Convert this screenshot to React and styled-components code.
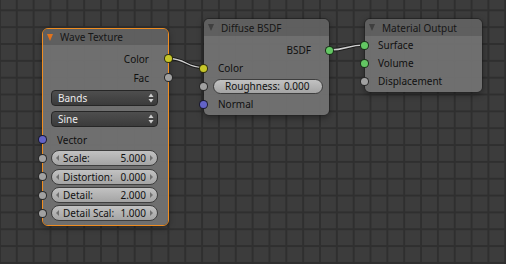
import React from "react";
import styled, { createGlobalStyle } from "styled-components";

const GlobalStyle = createGlobalStyle`
  html, body { margin: 0; padding: 0; background: #3c3c3c; }
  body { font-family: "Noto Sans", "DejaVu Sans", sans-serif; }
`;

const Canvas = styled.div`
  position: relative;
  width: 506px;
  height: 264px;
  overflow: hidden;
  background-color: #3c3c3c;
  background-image:
    linear-gradient(to right, #2f2f2f 1.5px, transparent 1.5px),
    linear-gradient(to bottom, #2f2f2f 1.5px, transparent 1.5px);
  background-size: 16.85px 16.85px;
  background-position: 15.8px 9.3px;
`;

const Wires = styled.svg`
  position: absolute;
  left: 0;
  top: 0;
  pointer-events: none;
`;

const NodeBox = styled.div`
  position: absolute;
  left: ${(p) => p.$x}px;
  top: ${(p) => p.$y}px;
  width: ${(p) => p.$w}px;
  box-sizing: border-box;
  border: 1px solid ${(p) => (p.$selected ? "#ef8d21" : "rgba(20,20,20,0.55)")};
  border-radius: 6px;
  box-shadow: 0 2px 6px rgba(0, 0, 0, 0.35);
`;

const Header = styled.div`
  height: ${(p) => p.$h}px;
  display: flex;
  align-items: center;
  gap: 6px;
  padding-left: 4px;
  background: rgba(99, 99, 99, 0.92);
  border-radius: 5px 5px 0 0;
`;

const Triangle = styled.span`
  width: 0;
  height: 0;
  border-left: 3.5px solid transparent;
  border-right: 3.5px solid transparent;
  border-top: 7px solid ${(p) => p.$color};
  margin-right: 1px;
`;

const Title = styled.span`
  font-size: 10px;
  color: #161616;
  line-height: 1;
`;

const Body = styled.div`
  display: flex;
  flex-direction: column;
  padding: ${(p) => p.$pt}px 0 ${(p) => p.$pb}px;
  background: rgba(116, 116, 116, 0.92);
  border-radius: 0 0 5px 5px;
`;

const Row = styled.div`
  position: relative;
  height: ${(p) => p.$h}px;
  margin-top: ${(p) => p.$mt || 0}px;
  display: flex;
  align-items: center;
  justify-content: ${(p) => (p.$out ? "flex-end" : "flex-start")};
  padding: 0 ${(p) => p.$pr || 0}px 0 ${(p) => p.$pl || 0}px;
`;

const Label = styled.span`
  font-size: 10px;
  color: #101010;
  line-height: 1;
`;

const Socket = styled.span`
  position: absolute;
  top: 50%;
  ${(p) => (p.$out ? "right: -5px;" : "left: -5px;")}
  width: 9px;
  height: 9px;
  box-sizing: border-box;
  margin-top: -4.5px;
  border-radius: 50%;
  background: ${(p) => p.$color};
  border: 1px solid rgba(0, 0, 0, 0.75);
`;

const Dropdown = styled.div`
  flex: 1;
  height: 16px;
  box-sizing: border-box;
  display: flex;
  align-items: center;
  justify-content: space-between;
  padding: 0 3px 0 6px;
  border: 1px solid #262626;
  border-radius: 4px;
  background: linear-gradient(to bottom, #4e4e4e, #3b3b3b);
  color: #ececec;
  font-size: 10px;
`;

const NumField = styled.div`
  flex: 1;
  height: ${(p) => p.$h || 16}px;
  box-sizing: border-box;
  display: flex;
  align-items: center;
  gap: 4px;
  padding: 0 ${(p) => p.$pr}px 0 ${(p) => p.$pl}px;
  border: 1px solid #3e3e3e;
  border-radius: 8px;
  background: linear-gradient(to bottom, #c2c2c2, #a4a4a4);
  color: #111;
  font-size: 10px;
`;

const FieldLabel = styled.span`
  flex: 1;
  white-space: nowrap;
`;

const Arrow = styled.span`
  width: 0;
  height: 0;
  border-top: 3px solid transparent;
  border-bottom: 3px solid transparent;
  ${(p) =>
    p.$dir === "left"
      ? "border-right: 3.5px solid #707070;"
      : "border-left: 3.5px solid #707070;"}
`;

const UpDown = () => (
  <svg width="6" height="10" viewBox="0 0 6 10">
    <path d="M3 0.5 L5.5 4 L0.5 4 Z" fill="#cfcfcf" />
    <path d="M3 9.5 L5.5 6 L0.5 6 Z" fill="#cfcfcf" />
  </svg>
);

const Slider = ({ label, value }) => (
  <NumField $pl={4} $pr={4}>
    <Arrow $dir="left" />
    <FieldLabel>{label}</FieldLabel>
    <span>{value}</span>
    <Arrow $dir="right" />
  </NumField>
);

const COLORS = {
  color: "#c7c729",
  value: "#a1a1a1",
  vector: "#6363c7",
  shader: "#63c763",
};

export default function App() {
  return (
    <>
      <GlobalStyle />
      <Canvas>
        <Wires width="506" height="264" viewBox="0 0 506 264">
          <g fill="none" strokeLinecap="round">
            <path d="M168.5 58.5 C 186 58.5, 186 67.5, 203.5 67.5" stroke="rgba(25,25,25,0.9)" strokeWidth="3.4" />
            <path d="M168.5 58.5 C 186 58.5, 186 67.5, 203.5 67.5" stroke="#cfcfcf" strokeWidth="1.4" />
            <path d="M329.5 50 C 347 50, 347 45, 364.5 45" stroke="rgba(25,25,25,0.9)" strokeWidth="3.4" />
            <path d="M329.5 50 C 347 50, 347 45, 364.5 45" stroke="#cfcfcf" strokeWidth="1.4" />
          </g>
        </Wires>

        <NodeBox $x={42} $y={28} $w={127} $selected>
          <Header $h={16}>
            <Triangle $color="#e2731c" />
            <Title>Wave Texture</Title>
          </Header>
          <Body $pt={4} $pb={4}>
            <Row $h={19} $out $pr={19}>
              <Label>Color</Label>
              <Socket $out $color={COLORS.color} />
            </Row>
            <Row $h={19} $out $pr={19}>
              <Label>Fac</Label>
              <Socket $out $color={COLORS.value} />
            </Row>
            <Row $h={16} $mt={3} $pl={8} $pr={10}>
              <Dropdown>
                <span>Bands</span>
                <UpDown />
              </Dropdown>
            </Row>
            <Row $h={16} $mt={4.7} $pl={8} $pr={10}>
              <Dropdown>
                <span>Sine</span>
                <UpDown />
              </Dropdown>
            </Row>
            <Row $h={19} $mt={3.8} $pl={14}>
              <Label>Vector</Label>
              <Socket $color={COLORS.vector} />
            </Row>
            <Row $h={16} $mt={1} $pl={8} $pr={10}>
              <Socket $color={COLORS.value} />
              <Slider label="Scale:" value="5.000" />
            </Row>
            <Row $h={16} $mt={2.33} $pl={8} $pr={10}>
              <Socket $color={COLORS.value} />
              <Slider label="Distortion:" value="0.000" />
            </Row>
            <Row $h={16} $mt={2.33} $pl={8} $pr={10}>
              <Socket $color={COLORS.value} />
              <Slider label="Detail:" value="2.000" />
            </Row>
            <Row $h={16} $mt={2.33} $pl={8} $pr={10}>
              <Socket $color={COLORS.value} />
              <Slider label="Detail Scal:" value="1.000" />
            </Row>
          </Body>
        </NodeBox>

        <NodeBox $x={203} $y={18} $w={127}>
          <Header $h={17}>
            <Triangle $color="#3f3f3f" />
            <Title>Diffuse BSDF</Title>
          </Header>
          <Body $pt={5} $pb={2}>
            <Row $h={18} $out $pr={18}>
              <Label>BSDF</Label>
              <Socket $out $color={COLORS.shader} />
            </Row>
            <Row $h={18} $pl={14}>
              <Label>Color</Label>
              <Socket $color={COLORS.color} />
            </Row>
            <Row $h={18} $pl={9} $pr={9}>
              <Socket $color={COLORS.value} />
              <NumField $h={15} $pl={11} $pr={13}>
                <FieldLabel>Roughness:</FieldLabel>
                <span>0.000</span>
              </NumField>
            </Row>
            <Row $h={18} $pl={14}>
              <Label>Normal</Label>
              <Socket $color={COLORS.vector} />
            </Row>
          </Body>
        </NodeBox>

        <NodeBox $x={364} $y={18} $w={119}>
          <Header $h={17}>
            <Triangle $color="#3f3f3f" />
            <Title>Material Output</Title>
          </Header>
          <Body $pt={0} $pb={2}>
            <Row $h={18} $pl={13}>
              <Label>Surface</Label>
              <Socket $color={COLORS.shader} />
            </Row>
            <Row $h={18} $pl={13}>
              <Label>Volume</Label>
              <Socket $color={COLORS.shader} />
            </Row>
            <Row $h={18} $pl={13}>
              <Label>Displacement</Label>
              <Socket $color={COLORS.value} />
            </Row>
          </Body>
        </NodeBox>
      </Canvas>
    </>
  );
}
